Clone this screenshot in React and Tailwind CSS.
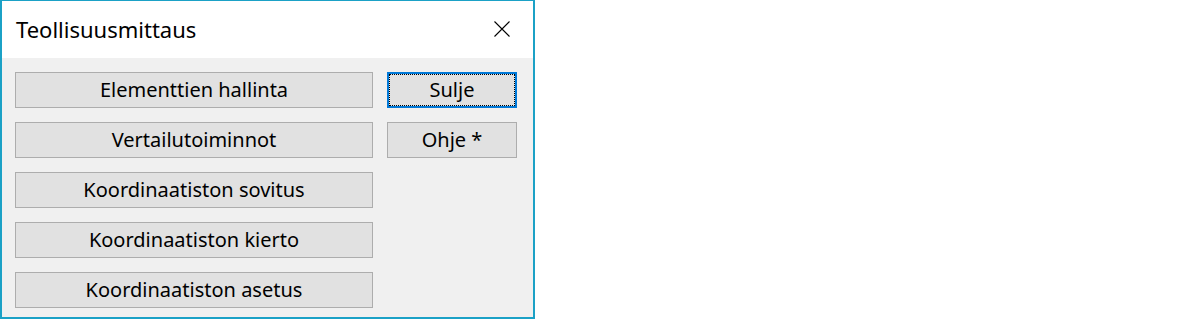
import React from 'react';

const font = { fontFamily: '"Segoe UI", "Noto Sans", "Open Sans", sans-serif' };

function DlgButton({ label, focused }) {
  if (focused) {
    return (
      <button
        type="button"
        className="h-[36px] w-full border-2 border-[#0078d7] bg-[#e1e1e1] p-0 text-[20px] leading-none text-black"
      >
        <span className="flex h-full w-full items-center justify-center border border-dotted border-black pb-[1px]">
          {label}
        </span>
      </button>
    );
  }
  return (
    <button
      type="button"
      className="flex h-[36px] w-full items-center justify-center border border-[#adadad] bg-[#e1e1e1] pb-[1px] text-[20px] leading-none text-black"
    >
      {label}
    </button>
  );
}

export default function App() {
  const leftButtons = [
    'Elementtien hallinta',
    'Vertailutoiminnot',
    'Koordinaatiston sovitus',
    'Koordinaatiston kierto',
    'Koordinaatiston asetus',
  ];

  return (
    <div className="h-[319px] w-[1200px] bg-white" style={font}>
      <div className="flex h-[319px] w-[535px] flex-col border-x-2 border-t border-b-2 border-[#1ba1c6] bg-[#f0f0f0]">
        {/* title bar */}
        <div className="flex h-[57px] items-center justify-between bg-white pl-[14px] pr-[23px]">
          <span className="pb-[2px] text-[22px] leading-none text-black">Teollisuusmittaus</span>
          <svg width="16" height="16" viewBox="0 0 16 16" className="mb-[1px]">
            <path d="M0.5 0.5 L15.5 15.5 M15.5 0.5 L0.5 15.5" stroke="#000" strokeWidth="1.1" fill="none" />
          </svg>
        </div>

        {/* client area */}
        <div className="flex gap-[14px] pl-[13px] pr-[16px] pt-[14px]">
          <div className="flex w-[358px] flex-col gap-[14px]">
            {leftButtons.map(label => (
              <DlgButton key={label} label={label} />
            ))}
          </div>
          <div className="flex w-[130px] flex-col gap-[14px]">
            <DlgButton label="Sulje" focused />
            <DlgButton label="Ohje *" />
          </div>
        </div>
      </div>
    </div>
  );
}
